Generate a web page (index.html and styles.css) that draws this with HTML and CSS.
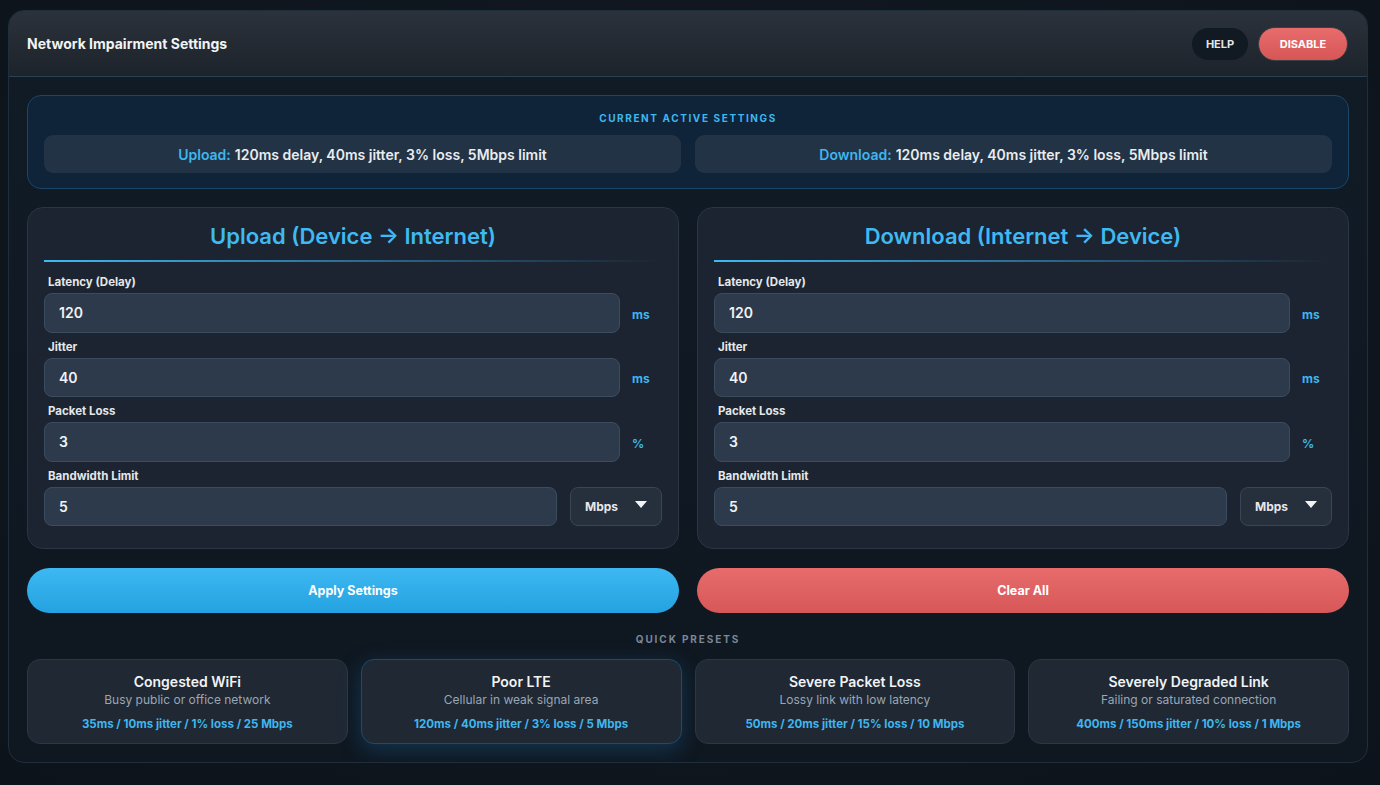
FILE: index.html
```html
<!DOCTYPE html>
<html lang="en">
<head>
    <meta charset="UTF-8">
    <meta name="viewport" content="width=device-width, initial-scale=1.0">
    <title>Network Impairment Settings</title>
    <link rel="stylesheet" href="styles.css">
</head>
<body>
    <div class="panel">
        <header class="panel-header">
            <h1>Network Impairment Settings</h1>
            <div class="header-actions">
                <button class="btn-help">HELP</button>
                <button class="btn-disable">DISABLE</button>
            </div>
        </header>

        <main class="panel-body">
            <!-- Current settings -->
            <section class="active-box">
                <h3 class="section-label active-label">CURRENT ACTIVE SETTINGS</h3>
                <div class="active-row">
                    <div class="active-pill"><span class="dir">Upload:</span> 120ms delay, 40ms jitter, 3% loss, 5Mbps limit</div>
                    <div class="active-pill"><span class="dir">Download:</span> 120ms delay, 40ms jitter, 3% loss, 5Mbps limit</div>
                </div>
            </section>

            <!-- Direction cards -->
            <div class="cards">
                <section class="card">
                    <h2 class="card-title">Upload (Device → Internet)</h2>
                    <div class="fields">
                        <div class="field">
                            <label for="up-delay">Latency (Delay)</label>
                            <div class="input-row">
                                <input type="text" id="up-delay" value="120">
                                <span class="unit">ms</span>
                            </div>
                        </div>
                        <div class="field">
                            <label for="up-jitter">Jitter</label>
                            <div class="input-row">
                                <input type="text" id="up-jitter" value="40">
                                <span class="unit">ms</span>
                            </div>
                        </div>
                        <div class="field">
                            <label for="up-loss">Packet Loss</label>
                            <div class="input-row">
                                <input type="text" id="up-loss" value="3">
                                <span class="unit">%</span>
                            </div>
                        </div>
                        <div class="field">
                            <label for="up-bw">Bandwidth Limit</label>
                            <div class="input-row">
                                <input type="text" id="up-bw" value="5">
                                <div class="select">Mbps <span class="caret"></span></div>
                            </div>
                        </div>
                    </div>
                </section>

                <section class="card">
                    <h2 class="card-title">Download (Internet → Device)</h2>
                    <div class="fields">
                        <div class="field">
                            <label for="down-delay">Latency (Delay)</label>
                            <div class="input-row">
                                <input type="text" id="down-delay" value="120">
                                <span class="unit">ms</span>
                            </div>
                        </div>
                        <div class="field">
                            <label for="down-jitter">Jitter</label>
                            <div class="input-row">
                                <input type="text" id="down-jitter" value="40">
                                <span class="unit">ms</span>
                            </div>
                        </div>
                        <div class="field">
                            <label for="down-loss">Packet Loss</label>
                            <div class="input-row">
                                <input type="text" id="down-loss" value="3">
                                <span class="unit">%</span>
                            </div>
                        </div>
                        <div class="field">
                            <label for="down-bw">Bandwidth Limit</label>
                            <div class="input-row">
                                <input type="text" id="down-bw" value="5">
                                <div class="select">Mbps <span class="caret"></span></div>
                            </div>
                        </div>
                    </div>
                </section>
            </div>

            <!-- Actions -->
            <div class="actions">
                <button class="btn-apply">Apply Settings</button>
                <button class="btn-clear">Clear All</button>
            </div>

            <!-- Presets -->
            <h3 class="section-label presets-label">QUICK PRESETS</h3>
            <div class="presets">
                <div class="preset">
                    <div class="preset-name">Congested WiFi</div>
                    <div class="preset-desc">Busy public or office network</div>
                    <div class="preset-values">35ms / 10ms jitter / 1% loss / 25 Mbps</div>
                </div>
                <div class="preset selected">
                    <div class="preset-name">Poor LTE</div>
                    <div class="preset-desc">Cellular in weak signal area</div>
                    <div class="preset-values">120ms / 40ms jitter / 3% loss / 5 Mbps</div>
                </div>
                <div class="preset">
                    <div class="preset-name">Severe Packet Loss</div>
                    <div class="preset-desc">Lossy link with low latency</div>
                    <div class="preset-values">50ms / 20ms jitter / 15% loss / 10 Mbps</div>
                </div>
                <div class="preset">
                    <div class="preset-name">Severely Degraded Link</div>
                    <div class="preset-desc">Failing or saturated connection</div>
                    <div class="preset-values">400ms / 150ms jitter / 10% loss / 1 Mbps</div>
                </div>
            </div>
        </main>
    </div>
</body>
</html>
```

FILE: styles.css
```css
/* General */
* {
    box-sizing: border-box;
}

body {
    font-family: Inter, "Noto Sans", Arial, sans-serif;
    margin: 0;
    padding: 10px 12px 0 8px;
    min-height: 785px;
    background: radial-gradient(ellipse at 50% 40%, #111a24 0%, #0d131a 100%);
    color: #e5e7eb;
}

button {
    font-family: inherit;
    cursor: pointer;
}

.panel {
    border: 1px solid #1f2e3d;
    border-radius: 16px;
    background: linear-gradient(180deg, #111b26 0%, #0f1720 100%);
    overflow: hidden;
}

/* Header */
.panel-header {
    height: 66px;
    display: flex;
    align-items: center;
    justify-content: space-between;
    padding: 0 19px 0 18px;
    background: linear-gradient(180deg, #2b323b 0%, #1c232b 100%);
    border-bottom: 1px solid #2a4054;
}

.panel-header h1 {
    margin: 0;
    font-size: 14px;
    font-weight: 700;
    color: #f1f3f5;
}

.header-actions {
    display: flex;
    align-items: center;
    gap: 10px;
}

.btn-help {
    height: 32px;
    width: 56px;
    border: none;
    border-radius: 16px;
    background: #111a22;
    color: #e5e7eb;
    font-size: 11px;
    font-weight: 700;
}

.btn-disable {
    height: 34px;
    width: 90px;
    border: 1px solid #3a3f47;
    border-radius: 17px;
    background: linear-gradient(180deg, #e86c6c 0%, #d65656 100%);
    color: #fff;
    font-size: 11px;
    font-weight: 700;
}

.panel-body {
    padding: 18px 18px 18px 18px;
}

.section-label {
    margin: 0;
    font-size: 10px;
    font-weight: 700;
    letter-spacing: 1.6px;
    text-align: center;
}

/* Current active settings */
.active-box {
    border: 1px solid #1d4766;
    border-radius: 14px;
    background: #0f2339;
    padding: 16px 16px 15px;
}

.active-label {
    color: #3fb6ee;
    line-height: 12px;
    margin-bottom: 11px;
}

.active-row {
    display: flex;
    gap: 14px;
}

.active-pill {
    flex: 1;
    height: 38px;
    display: flex;
    align-items: center;
    justify-content: center;
    gap: 4px;
    background: #223346;
    border-radius: 9px;
    font-size: 14px;
    font-weight: 600;
    color: #e9ecef;
}

.dir {
    color: #3fb6ee;
}

/* Cards */
.cards {
    display: flex;
    gap: 18px;
    margin-top: 18px;
}

.card {
    flex: 1;
    background: #1b2430;
    border: 1px solid #2a3644;
    border-radius: 16px;
    padding: 14px 16px 22px;
}

.card-title {
    margin: 0;
    font-size: 22px;
    line-height: 28px;
    font-weight: 600;
    color: #3fb9f2;
    text-align: center;
    padding-bottom: 12px;
    position: relative;
}

.card-title::after {
    content: "";
    position: absolute;
    left: 0;
    right: 0;
    bottom: 0;
    height: 2px;
    background: linear-gradient(90deg, #3fb9f2 0%, #2b6d92 50%, rgba(43, 109, 146, 0) 100%);
}

.fields {
    display: flex;
    flex-direction: column;
    gap: 7px;
    margin-top: 13px;
}

.field label {
    display: block;
    font-size: 11.5px;
    line-height: 15px;
    font-weight: 700;
    color: #e5e7eb;
    padding-left: 4px;
    margin-bottom: 3px;
}

.input-row {
    display: flex;
    align-items: center;
    gap: 12px;
}

.input-row input {
    flex: 1;
    min-width: 0;
    height: 39.5px;
    padding: 0 14px;
    background: #2d3a4b;
    border: 1px solid #3c4c5f;
    border-radius: 8px;
    color: #f1f3f5;
    font-family: inherit;
    font-size: 14px;
    font-weight: 600;
}

.unit {
    width: 30px;
    padding-top: 3px;
    font-size: 12px;
    font-weight: 700;
    color: #3fb6ee;
}

.select {
    width: 92px;
    height: 39.5px;
    margin-left: 1px;
    display: flex;
    align-items: center;
    justify-content: space-between;
    padding: 0 14px;
    background: #262f3c;
    border: 1px solid #394657;
    border-radius: 8px;
    font-size: 12px;
    font-weight: 700;
    color: #e5e7eb;
}

.caret {
    width: 0;
    height: 0;
    margin-top: -3px;
    border-left: 6px solid transparent;
    border-right: 6px solid transparent;
    border-top: 7px solid #f1f3f5;
}

/* Buttons */
.actions {
    display: flex;
    gap: 18px;
    margin-top: 19px;
}

.actions button {
    flex: 1;
    height: 45px;
    border: none;
    border-radius: 23px;
    color: #fff;
    font-size: 12.5px;
    font-weight: 700;
}

.btn-apply {
    background: linear-gradient(180deg, #3db8f2 0%, #24a2e0 100%);
}

.btn-clear {
    background: linear-gradient(180deg, #e86c6c 0%, #d65757 100%);
}

/* Presets */
.presets-label {
    color: #7a8899;
    line-height: 12px;
    letter-spacing: 1.9px;
    margin: 20px 0 14px;
}

.presets {
    display: flex;
    gap: 13px;
}

.preset {
    flex: 1;
    height: 85px;
    background: #1f2833;
    border: 1px solid #2c3745;
    border-radius: 13px;
    padding: 13px 8px 0;
    text-align: center;
}

.preset.selected {
    border-color: #1f4a69;
    box-shadow: 0 6px 22px rgba(30, 110, 170, 0.35);
}

.preset-name {
    font-size: 14px;
    line-height: 17px;
    font-weight: 600;
    color: #f1f3f5;
}

.preset-desc {
    margin-top: 2px;
    font-size: 12px;
    line-height: 15px;
    color: #9aa6b4;
}

.preset-values {
    margin-top: 10px;
    font-size: 11.5px;
    line-height: 15px;
    font-weight: 700;
    color: #3fb6ee;
}
```
